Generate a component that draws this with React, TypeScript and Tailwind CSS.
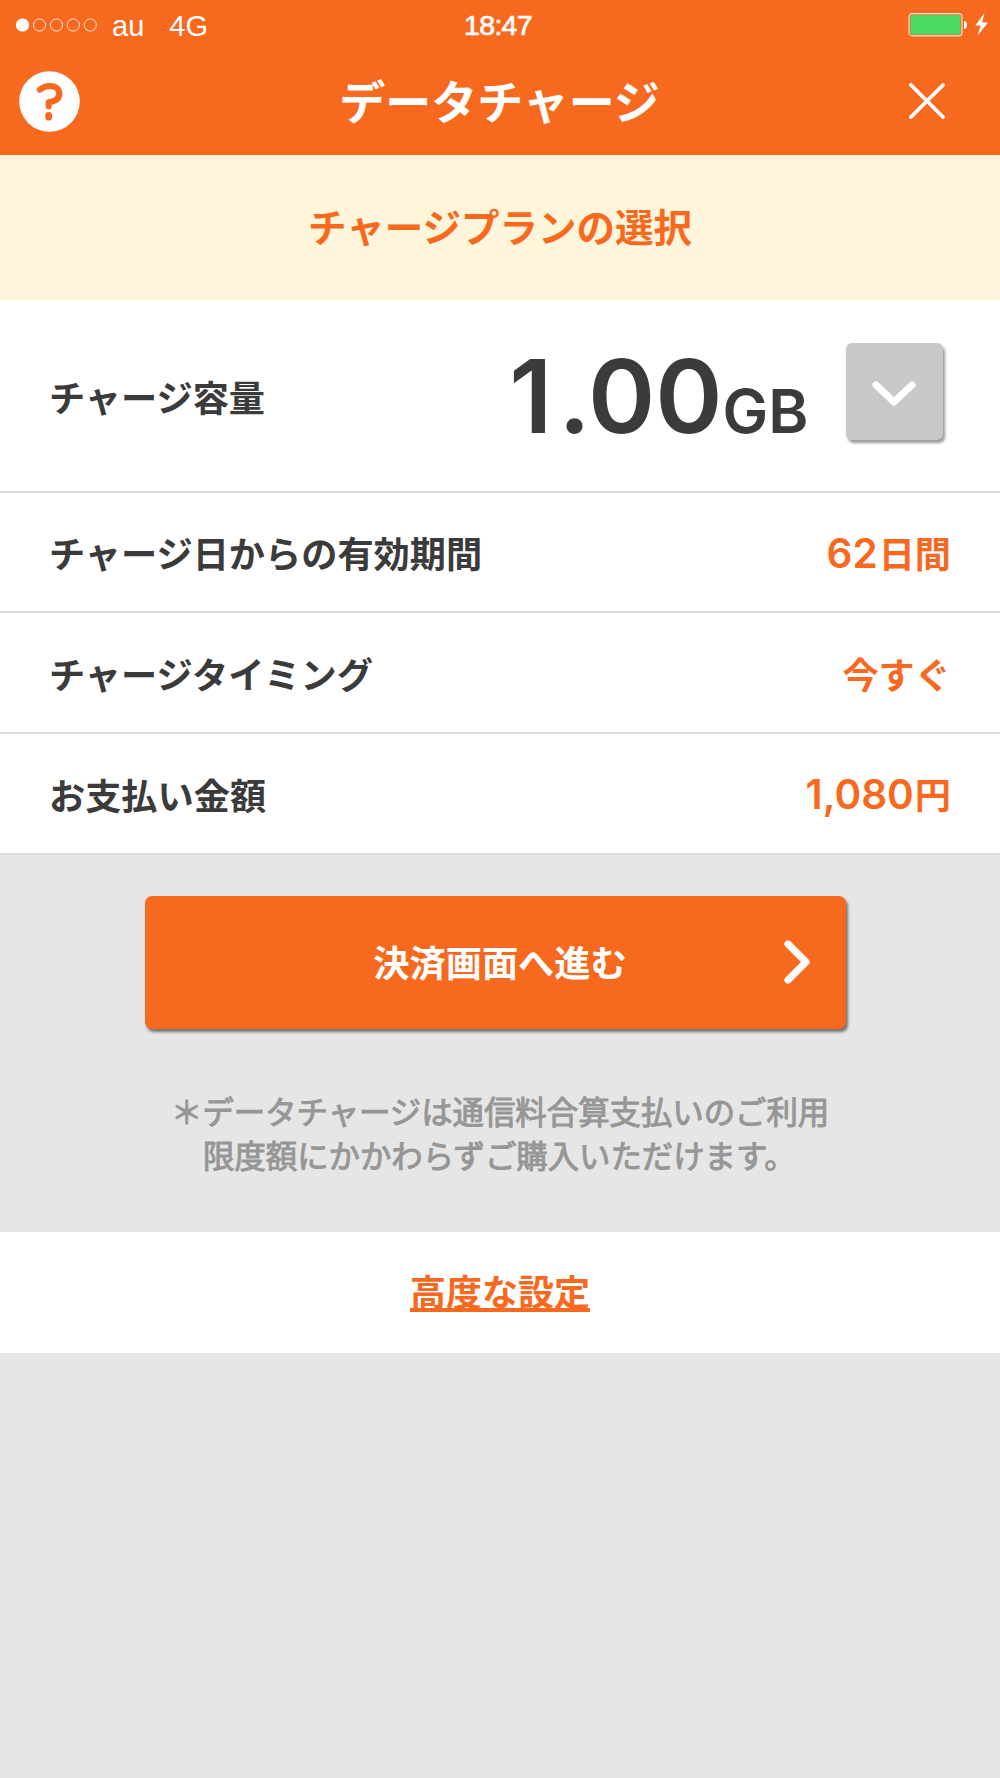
import React from "react";

const jp = "font-['Noto_Sans_CJK_JP',sans-serif]";

function SignalDots() {
  return (
    <svg width="84" height="16" viewBox="0 0 84 16" className="block">
      <circle cx="7.5" cy="8" r="6.6" fill="#fff" />
      {[24.5, 41.5, 58.3, 75.3].map((x) => (
        <circle key={x} cx={x} cy="8" r="6.1" fill="none" stroke="#fff" strokeWidth="0.9" opacity="0.9" />
      ))}
    </svg>
  );
}

function StatusBar() {
  return (
    <div className="grid h-[50px] grid-cols-3 items-center text-white font-['Liberation_Sans',sans-serif] text-[29px] leading-none">
      <div className="flex items-center pl-[15px]">
        <SignalDots />
        <span className="ml-[13px] mt-[2px]">au</span>
        <span className="ml-[25px] mt-[2px]">4G</span>
      </div>
      <div className="mt-[1px] mr-[4px] text-center text-[28.5px] tracking-[-0.7px] [-webkit-text-stroke:0.7px_#fff]">18:47</div>
      <div className="flex justify-end pr-[10px]">
        <svg width="82" height="26" viewBox="0 0 82 26" className="block">
          <rect x="1" y="1.6" width="53" height="22.3" rx="3.2" fill="none" stroke="#ffe0cb" strokeWidth="1.1" />
          <rect x="2.4" y="2.9" width="50.2" height="19.6" rx="1.6" fill="#4cd964" />
          <path d="M56 9v8q3-.6 3-4t-3-4z" fill="#fff" />
          <path d="M76.5 1 67.3 13.4h5.4L69.6 23.6 80 10.6h-5.8z" fill="#fff" />
        </svg>
      </div>
    </div>
  );
}

function TitleBar() {
  return (
    <div className="flex h-[104px] items-start justify-between pl-[19px] pr-[55px] pt-[21px]">
      <svg width="61" height="61" viewBox="0 0 61 61" className="block">
        <circle cx="30.5" cy="30.5" r="30.3" fill="#fff" />
        <path d="M20.9 18.6C24.4 15.9 27.5 14.9 31 15c6.2.2 9.3 3.4 9.3 7.9 0 4.9-4.4 7.3-10.6 8.4v4" fill="none" stroke="#f7691f" strokeWidth="6.2" strokeLinecap="round" strokeLinejoin="round" />
        <rect x="26.3" y="41" width="6.8" height="8.6" rx="3.4" fill="#f7691f" />
      </svg>
      <h1 className={`${jp} ml-[10px] mt-[-7.5px] text-[46px] font-bold leading-[70px] text-white`}>データチャージ</h1>
      <svg width="36" height="36" viewBox="0 0 36 36" className="mt-[12px] block">
        <path d="M2 2 34 34M34 2 2 34" stroke="#fff" strokeWidth="3.8" strokeLinecap="round" />
      </svg>
    </div>
  );
}

function Row({ label, children }: { label: string; children: React.ReactNode }) {
  return (
    <div className="flex h-[120.8px] items-center justify-between border-b-[2.5px] border-[#dcdcdc] bg-white pl-[49px] pr-[49px]">
      <span className="mt-px text-[36.2px] font-bold leading-none text-[#3b3b3b]">{label}</span>
      <span className="flex items-baseline text-[36.2px] font-bold leading-none text-[#f7691f]">{children}</span>
    </div>
  );
}

function Digits({ children }: { children: string }) {
  return <span className="mr-[1px] mt-[4px] font-['Inter',sans-serif] text-[40.5px] font-[560] leading-none">{children}</span>;
}

export default function App() {
  return (
    <main className={`${jp} flex h-[1778px] w-[1000px] flex-col overflow-hidden bg-[#e6e6e6]`}>
      <header className="h-[154.5px] bg-[#f7691f]">
        <StatusBar />
        <TitleBar />
      </header>
      <h2 className="flex h-[145px] items-center justify-center bg-[#fff5da] pb-[4px] text-[38.5px] font-bold leading-none text-[#f7691f]">
        チャージプランの選択
      </h2>
      <section>
        <div className="flex h-[193px] items-start justify-between border-b-[2.5px] border-[#dcdcdc] bg-white pl-[49px] pr-[57.5px]">
          <span className="mt-[78px] text-[36.2px] font-bold leading-none text-[#3b3b3b]">チャージ容量</span>
          <div className="flex items-start">
            <span className="mt-[45px] flex items-baseline font-['Inter',sans-serif] leading-none text-[#3b3b3b]">
              <span className="text-[102px] font-[560]"><span className="mr-[6px]">1</span>.00</span>
              <span className="text-[61px] font-semibold">GB</span>
            </span>
            <button className="ml-[37px] mt-[43.5px] flex h-[97px] w-[97px] items-center justify-center rounded-[6px] bg-[#c8c8c8] shadow-[2px_3px_3px_rgba(60,50,55,0.5)]">
              <svg width="44" height="28" viewBox="0 0 44 28" className="mt-[6px] block">
                <path d="M4 4 22 21 40 4" fill="none" stroke="#fff" strokeWidth="7.2" strokeLinecap="round" strokeLinejoin="round" />
              </svg>
            </button>
          </div>
        </div>
        <Row label="チャージ日からの有効期間"><Digits>62</Digits>日間</Row>
        <Row label="チャージタイミング">今すぐ</Row>
        <Row label="お支払い金額"><Digits>1,080</Digits>円</Row>
      </section>
      <section className="flex h-[377.2px] flex-col items-center pt-[41.2px]">
        <button className="mr-[9px] grid h-[133px] w-[701px] grid-cols-[1fr_auto_1fr] items-center rounded-[7px] bg-[#f7691f] shadow-[2px_3px_3px_rgba(0,0,0,0.5)]">
          <span />
          <span className="mb-[2px] ml-[9px] text-[36.2px] font-bold leading-none text-white">決済画面へ進む</span>
          <svg width="28" height="44" viewBox="0 0 28 44" className="mb-[1px] mr-[34.5px] block justify-self-end">
            <path d="M4 4 22 22 4 40" fill="none" stroke="#fff" strokeWidth="7.2" strokeLinecap="round" strokeLinejoin="round" />
          </svg>
        </button>
        <p className="mt-[60px] w-[660px] whitespace-nowrap pl-[1px] text-[31.4px] leading-[43.5px] text-[#969696] [-webkit-text-stroke:1px_#969696]">
          ＊データチャージは通信料合算支払いのご利用
          <br />
          <span className="pl-[32px]">限度額にかかわらずご購入いただけます。</span>
        </p>
      </section>
      <section className="flex h-[121px] items-center justify-center bg-white">
        <a className="mt-[3px] flex h-[35px] items-end border-b-4 border-[#f7691f] text-[36px] font-bold leading-[35px] text-[#f7691f]">高度な設定</a>
      </section>
    </main>
  );
}
